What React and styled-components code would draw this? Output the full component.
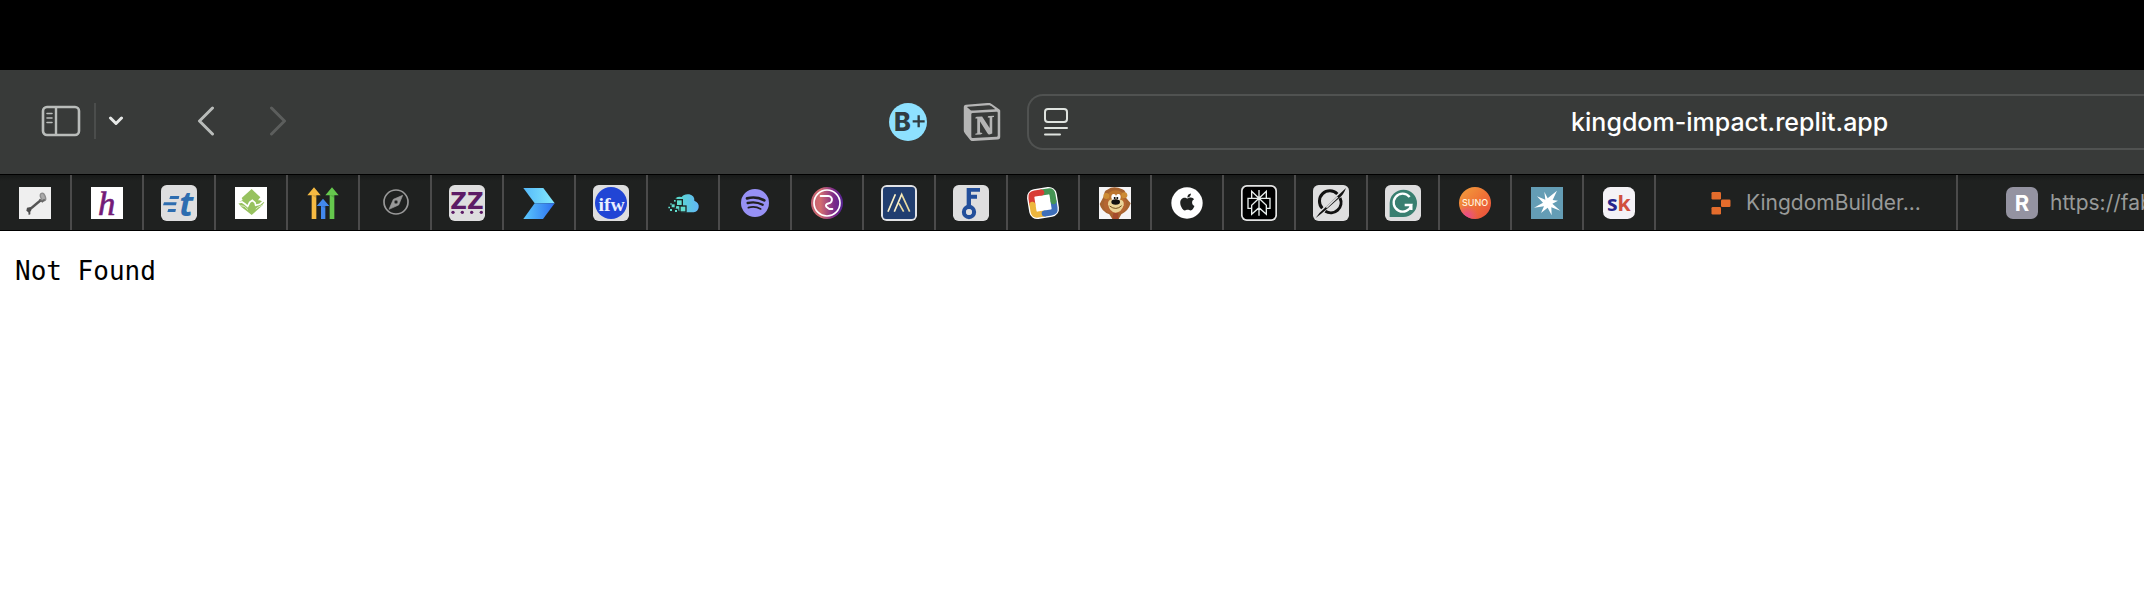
import React from "react";
import styled, { createGlobalStyle } from "styled-components";
import { SiNotion } from "react-icons/si";
import { FaApple } from "react-icons/fa";

const GlobalStyle = createGlobalStyle`
  * { box-sizing: border-box; }
  body { margin: 0; background: #fff; overflow-x: hidden; }
  button, input { font: inherit; color: inherit; border: 0; padding: 0; margin: 0; background: none; }
  svg { display: block; }
`;

const Window = styled.div`
  font-family: Inter, "Liberation Sans", sans-serif;
`;

const DesktopStrip = styled.div`
  height: 70px;
  background: #000;
`;

const Toolbar = styled.header`
  display: flex;
  align-items: center;
  height: 104px;
  padding: 0 0 0 37px;
  background: #383a39;
  color: #b9bcba;
`;

const Group = styled.div`
  display: flex;
  align-items: center;
`;

const SidebarGroup = styled(Group)`
  margin-right: 46px;
  padding-bottom: 2px;
`;

const HistoryGroup = styled(Group)`
  gap: 24px;
  padding-bottom: 2px;
`;

const ExtensionGroup = styled(Group)`
  gap: 26px;
  margin: 0 21px 0 auto;
`;

const IconButton = styled.button`
  display: flex;
  align-items: center;
  justify-content: center;
  width: ${(p) => p.$width || 48}px;
  height: 48px;
  color: ${(p) => p.$color || "inherit"};
`;

const Divider = styled.span`
  width: 2px;
  height: 36px;
  margin-left: 9px;
  background: #4b4d4c;
`;

const AddressBar = styled.form`
  display: flex;
  align-items: center;
  flex: 0 0 calc(52% + 21px);
  height: 56px;
  border: 2px solid #505251;
  border-right: 0;
  border-radius: 16px 0 0 16px;
  color: #dfe3df;
`;

const AddressInput = styled.input`
  flex: 1;
  min-width: 0;
  height: 52px;
  padding-left: 232px;
  color: #fff;
  font-size: 25px;
  font-weight: 500;
  text-align: center;
  outline: 0;
`;

const TabBar = styled.nav`
  display: flex;
  height: 57px;
  border-top: 1px solid #000;
  border-bottom: 1px solid #000;
  background: linear-gradient(#171918, #1f2120 6px);
  overflow: hidden;
`;

const PinnedTab = styled.button`
  display: flex;
  flex: 0 0 72px;
  align-items: center;
  justify-content: center;
  border-right: 2px solid #4b4b4b;
`;

const TitledTab = styled.button`
  display: flex;
  align-items: center;
  gap: 10px;
  flex: ${(p) => (p.$last ? "1 0 0" : "0 0 302px")};
  min-width: 0;
  padding-left: ${(p) => (p.$last ? 46 : 48)}px;
  border-right: ${(p) => (p.$last ? 0 : "2px solid #4b4b4b")};
  color: #989a99;
  font-size: 21px;
  white-space: nowrap;
  overflow: hidden;

  svg { flex: none; }
`;

const Page = styled.main`
  padding: 24px 15px;
`;

const Message = styled.pre`
  margin: 0;
  color: #000;
  font-family: "DejaVu Sans Mono", monospace;
  font-size: 26px;
  line-height: 32px;
`;

/* Favicons share one 108-unit grid, drawn at 36px. */
const Favicon = ({ children }) => (
  <svg width="36" height="36" viewBox="0 0 108 108" aria-hidden="true">{children}</svg>
);
const Tile = ({ fill = "#dededf" }) => <rect width="108" height="108" rx="17" fill={fill} />;
const Square = ({ fill = "#fff" }) => <rect x="6" y="6" width="96" height="96" fill={fill} />;

const pinned = [
  ["Key", <>
    <Square fill="#efefef" />
    <path d="M36 75 72 45" stroke="#555" strokeWidth="7" />
    <path d="M30 68 41 66 43 76 40 80 40 88 35 90 34 82 28 77Z" fill="#4d4d4d" />
    <ellipse cx="78" cy="36" rx="7" ry="12" fill="#aaa" stroke="#8d8d8d" strokeWidth="4" transform="rotate(-22 78 36)" />
    <path d="M67 43 76 50 83 43" fill="none" stroke="#666" strokeWidth="5" />
  </>],
  ["Script h", <>
    <Square />
    <text x="53" y="89" textAnchor="middle" fontFamily="Liberation Serif, serif" fontStyle="italic" fontSize="104" fill="#741b78" stroke="#741b78" strokeWidth="2">h</text>
  </>],
  ["Timing", <>
    <Tile />
    <path d="M28 33H55L53 42H25ZM9 52H47L45 61H6ZM22 72H45L43 81H19Z" fill="#2d6db0" />
    <text x="76" y="92" textAnchor="middle" fontFamily="Open Sans, sans-serif" fontStyle="italic" fontWeight="700" fontSize="102" fill="#2d6db0">t</text>
  </>],
  ["Green", <>
    <Square />
    <path d="M56 12 82 37 75 46 80 46 94 52 84 65 72 76 56 90 40 77 25 66 15 53 29 45 26 39Z" fill="#97c25f" />
    <path d="M13 54 27 51 36 57 44 64 50 52 58 46 66 53 68 61 80 58 95 45" fill="none" stroke="#fff" strokeWidth="5" />
    <path d="M22 62 34 64 45 74M68 72 76 66 90 60" fill="none" stroke="#d9ebc6" strokeWidth="3" />
  </>],
  ["Arrows", <>
    <path d="M7 31 27 7 47 31H34V102H20V31Z" fill="#f6ba42" />
    <path d="M61 31 81 7 101 31H88V102H74V31Z" fill="#65c84d" />
    <path d="M35 63 54 41 73 63H61V102H48V63Z" fill="#4288ed" />
    <path d="M20 31H34V39ZM74 31H88V39ZM48 63H61V70Z" fill="#000" opacity=".14" />
  </>],
  ["Compass", <>
    <circle cx="57" cy="51" r="36" fill="none" stroke="#999" strokeWidth="5" />
    <path fillRule="evenodd" d="M77 31 65 60 36 73 49 43ZM57 45A6 6 0 1 0 57 57A6 6 0 1 0 57 45Z" fill="#999" stroke="#999" strokeWidth="2" />
  </>],
  ["ZZ", <>
    <Tile />
    <text x="54" y="72" textAnchor="middle" fontFamily="DejaVu Sans, sans-serif" fontWeight="700" fontSize="69" fill="#5c1b66">ZZ</text>
    {[12, 40, 68, 97].map((x) => <circle key={x} cx={x} cy="82" r="5" fill="#5c1b66" />)}
  </>],
  ["Chevron", <>
    <defs>
      <linearGradient id="chevTop" x1="0" x2="1"><stop stopColor="#55b9fa" /><stop offset="1" stopColor="#84eafd" /></linearGradient>
      <linearGradient id="chevLow" x1="0" x2="1"><stop stopColor="#5bc9fd" /><stop offset="1" stopColor="#2d6ff0" /></linearGradient>
    </defs>
    <path d="M7 9H67L101 55H41Z" fill="url(#chevTop)" />
    <path d="M41 55H101L66 102H7Z" fill="url(#chevLow)" />
  </>],
  ["ifw", <>
    <Tile />
    <circle cx="54" cy="54" r="48" fill="#2145d5" />
    <text x="56" y="78" textAnchor="middle" fontFamily="Liberation Serif, serif" fontWeight="700" fontSize="59" fill="#e9eeff">ifw</text>
  </>],
  ["Cloud", <>
    <defs><linearGradient id="cloud" x1="0" x2="1"><stop stopColor="#58dfc5" /><stop offset="1" stopColor="#62b6f7" /></linearGradient></defs>
    <path d="M30 45Q34 32 50 36Q57 26 73 28Q89 32 88 47Q103 53 101 67Q99 81 86 82H49L28 70Z" fill="url(#cloud)" />
    <g fill="#62dfcf" stroke="#1e2524" strokeWidth="4">
      <rect x="34" y="44" width="18" height="18" /><rect x="45" y="63" width="18" height="18" />
      <rect x="18" y="56" width="13" height="13" /><rect x="28" y="73" width="10" height="10" />
      <rect x="25" y="43" width="9" height="9" /><rect x="13" y="70" width="10" height="10" />
    </g>
    <path d="M10 65h5v5h-5ZM16 55h4v4h-4ZM35 64h6v6h-6Z" fill="#62dfcf" />
  </>],
  ["Spotify", <>
    <circle cx="54" cy="54" r="42" fill="#9791f5" />
    <g fill="none" stroke="#202020" strokeLinecap="round">
      <path d="M30 40Q58 33 82 46" strokeWidth="8" />
      <path d="M32 54Q56 48 77 59" strokeWidth="7" />
      <path d="M34 68Q54 62 71 72" strokeWidth="5" />
    </g>
  </>],
  ["Rounded R", <>
    <defs><linearGradient id="rose" x1="0" x2="1"><stop stopColor="#bf6072" /><stop offset=".3" stopColor="#d26c70" /><stop offset=".72" stopColor="#7b2a8a" /><stop offset="1" stopColor="#552493" /></linearGradient></defs>
    <circle cx="54" cy="54" r="48" fill="url(#rose)" />
    <circle cx="54" cy="54" r="39" fill="none" stroke="#fff" strokeWidth="5" />
    <path d="M35 33H55A11 11 0 0 1 60 55Q46 58 53 66L61 72H70" fill="none" stroke="#fff" strokeWidth="6" strokeLinecap="round" />
  </>],
  ["Peaks", <>
    <Tile fill="#e2e3e6" />
    <rect x="6" y="6" width="96" height="96" rx="9" fill="#213e70" />
    <path d="M21 80 43 28M40 80 62 28 86 80M54 55 68 80" fill="none" stroke="#eadba0" strokeWidth="5" />
    <path d="M21 80 43 28M40 80 62 28" fill="none" stroke="#fff" strokeWidth="2" />
  </>],
  ["Key F", <>
    <Tile />
    <path d="M41 9H81V20H54V29H72V41H54V66H41Z" fill="#234f9b" />
    <circle cx="48" cy="81" r="15" fill="none" stroke="#234f9b" strokeWidth="13" />
    <circle cx="48" cy="81" r="9" fill="#dededf" />
  </>],
  ["Color frame", <g transform="rotate(-9 54 54)">
    <rect x="9" y="9" width="90" height="90" rx="24" fill="#fff" />
    <g fill="none" strokeWidth="18">
      <path d="M22 54V34Q22 22 34 22H54" stroke="#d83c35" />
      <path d="M54 22H74Q86 22 86 34V54" stroke="#459454" />
      <path d="M86 54V74Q86 86 74 86H54" stroke="#3e6fba" />
      <path d="M54 86H34Q22 86 22 74V54" stroke="#edb73f" />
    </g>
    <circle cx="54" cy="22" r="9" fill="#d83c35" /><circle cx="86" cy="54" r="9" fill="#459454" />
    <circle cx="54" cy="86" r="9" fill="#3e6fba" /><circle cx="22" cy="54" r="9" fill="#edb73f" />
  </g>],
  ["Lion", <>
    <Square fill="#f5f4f5" />
    <path d="M22 31Q20 18 31 14Q50 0 76 13Q89 17 85 36L101 55Q94 78 73 88L65 102H46L37 88Q13 79 8 57Z" fill="#a7632f" />
    <path d="M29 38Q12 54 27 78Q48 92 75 82Q94 69 85 42" fill="#b56531" />
    <ellipse cx="56" cy="36" rx="25" ry="20" fill="#bd752e" />
    <circle cx="28" cy="33" r="9" fill="#cd8c35" /><circle cx="82" cy="31" r="9" fill="#cd8c35" />
    <path d="M33 58Q32 43 49 43H66Q83 45 80 61Q73 83 56 83Q38 82 33 58Z" fill="#ead498" />
    <ellipse cx="50" cy="36" rx="7" ry="9" fill="#fff" /><ellipse cx="64" cy="36" rx="7" ry="9" fill="#fff" />
    <circle cx="53" cy="39" r="3" /><circle cx="61" cy="39" r="3" />
    <ellipse cx="56" cy="51" rx="13" ry="8" fill="#111" />
    <path d="M38 63Q57 78 74 62" fill="none" stroke="#73501e" strokeWidth="3" />
    <path d="M49 84H64V102H47Z" fill="#a44a2c" />
  </>],
  ["Apple", <>
    <circle cx="54" cy="54" r="47" fill="#fff" />
    <FaApple x="26" y="22" size="58" color="#202221" />
  </>],
  ["Perplexity", <>
    <Tile fill="#e4e4e4" />
    <rect x="5" y="5" width="98" height="98" rx="13" fill="#000" />
    <path d="M54 15V92M54 40 32 19V40H21V70H32V88L54 68 76 88V70H87V40H76V19L54 40ZM32 40H76M54 40 32 61V72M54 40 76 61V72" fill="none" stroke="#e8eeec" strokeWidth="4" />
  </>],
  ["Grok", <>
    <Tile />
    <path d="M28 70A31 31 0 0 1 73 27M81 39A31 31 0 0 1 37 79" fill="none" stroke="#111" strokeWidth="9" />
    <path d="M8 99Q17 84 33 71L99 9Q92 29 78 40L38 75Q24 87 8 99Z" fill="#111" />
    <path d="M40 68 74 36" stroke="#dededf" strokeWidth="5" />
  </>],
  ["Grammarly", <>
    <Tile />
    <path d="M14 96V54A41 41 0 1 1 55 96Z" fill="#397f70" />
    <path d="M74 36A27 27 0 1 0 79 60H59M79 60V75" fill="none" stroke="#fff" strokeWidth="7" />
  </>],
  ["Suno", <>
    <defs><linearGradient id="suno" x1="0" y1="0" x2="1" y2="1"><stop stopColor="#f2a13d" /><stop offset=".5" stopColor="#ef7436" /><stop offset="1" stopColor="#e84a3f" /></linearGradient>
    <radialGradient id="pink" cx=".25" cy=".9" r=".35"><stop stopColor="#e84b8f" /><stop offset="1" stopColor="#e84b8f" stopOpacity="0" /></radialGradient></defs>
    <circle cx="54" cy="54" r="48" fill="url(#suno)" /><circle cx="54" cy="54" r="48" fill="url(#pink)" />
    <text x="54" y="63" textAnchor="middle" fontFamily="Inter, sans-serif" fontWeight="500" fontSize="27" fill="#fff3df">SUNO</text>
  </>],
  ["Star", <>
    <Square fill="#649db5" />
    <path d="M46 20 56 40 84 17 71 45 87 47 70 56 94 77 67 67 68 91 56 68 36 84 45 64 15 68 42 53 24 34 49 44Z" fill="#fff" />
  </>],
  ["sk", <>
    <rect x="6" y="6" width="96" height="96" rx="22" fill="#f4f2f6" />
    <text x="18" y="79" fontFamily="Open Sans, sans-serif" fontWeight="700" fontSize="64" fill="#29278d">s<tspan fill="#d1503e">k</tspan></text>
  </>],
];

export default function App() {
  return (
    <Window>
      <GlobalStyle />
      <DesktopStrip />
      <Toolbar>
        <SidebarGroup>
          <IconButton aria-label="Show sidebar">
            <svg width="40" height="32" viewBox="0 0 40 32" fill="none" stroke="currentColor">
              <rect x="2" y="2" width="36" height="28" rx="4" strokeWidth="2.6" />
              <path d="M15 2V30" strokeWidth="2.4" />
              <path d="M6 8.5H11M6 13H11M6 17.5H11" strokeWidth="1.6" strokeLinecap="round" />
            </svg>
          </IconButton>
          <Divider />
          <IconButton aria-label="Tab groups" $width={40} $color="#e6e8e7">
            <svg width="16" height="10" viewBox="0 0 16 10" fill="none" stroke="currentColor" strokeWidth="3" strokeLinecap="round" strokeLinejoin="round"><path d="M2.5 2 8 7.5 13.5 2" /></svg>
          </IconButton>
        </SidebarGroup>
        <HistoryGroup>
          <IconButton aria-label="Back">
            <svg width="18" height="30" viewBox="0 0 18 30" fill="none" stroke="currentColor" strokeWidth="3" strokeLinecap="round" strokeLinejoin="round"><path d="M15.5 2 2.5 15 15.5 28" /></svg>
          </IconButton>
          <IconButton aria-label="Forward" $color="#5c5e5d">
            <svg width="18" height="30" viewBox="0 0 18 30" fill="none" stroke="currentColor" strokeWidth="3" strokeLinecap="round" strokeLinejoin="round"><path d="M2.5 2 15.5 15 2.5 28" /></svg>
          </IconButton>
        </HistoryGroup>
        <ExtensionGroup>
          <IconButton aria-label="B plus extension">
            <svg width="38" height="38" viewBox="0 0 114 114">
              <circle cx="57" cy="57" r="57" fill="#8ee1ff" />
              <text x="15" y="84" fontFamily="Inter, sans-serif" fontWeight="800" fontSize="76" fill="#303c42">B</text>
              <path d="M89 37V73M71 55H107" stroke="#303c42" strokeWidth="7" />
            </svg>
          </IconButton>
          <IconButton aria-label="Notion extension"><SiNotion size={38} color="#b5b5b5" /></IconButton>
        </ExtensionGroup>
        <AddressBar onSubmit={(e) => e.preventDefault()}>
          <IconButton type="button" aria-label="Page menu" $width={54}>
            <svg width="24" height="28" viewBox="0 0 24 28" fill="none" stroke="currentColor" strokeWidth="2" strokeLinecap="round"><rect x="1" y="1" width="22" height="13" rx="3" /><path d="M1 20H23M1 26.5H16" /></svg>
          </IconButton>
          <AddressInput aria-label="Address" defaultValue="kingdom-impact.replit.app" />
        </AddressBar>
      </Toolbar>
      <TabBar aria-label="Tabs">
        {pinned.map(([name, art]) => (
          <PinnedTab key={name} aria-label={name}><Favicon>{art}</Favicon></PinnedTab>
        ))}
        <TitledTab>
          <svg width="32" height="32" viewBox="0 0 32 32" fill="#e46c2c">
            <rect x="7.5" y="5" width="9.5" height="7.5" rx="1.2" />
            <rect x="17" y="12.5" width="9.5" height="7.5" rx="1.2" />
            <rect x="7.5" y="20" width="9.5" height="7.5" rx="1.2" />
          </svg>
          <span>KingdomBuilder...</span>
        </TitledTab>
        <TitledTab $last>
          <svg width="36" height="36" viewBox="0 0 36 36">
            <rect x="2" y="2" width="32" height="32" rx="7" fill="#9493a1" />
            <text x="18" y="26" textAnchor="middle" fontFamily="Inter, sans-serif" fontWeight="700" fontSize="22" fill="#fff">R</text>
          </svg>
          <span>https://fab</span>
        </TitledTab>
      </TabBar>
      <Page>
        <Message>Not Found</Message>
      </Page>
    </Window>
  );
}
